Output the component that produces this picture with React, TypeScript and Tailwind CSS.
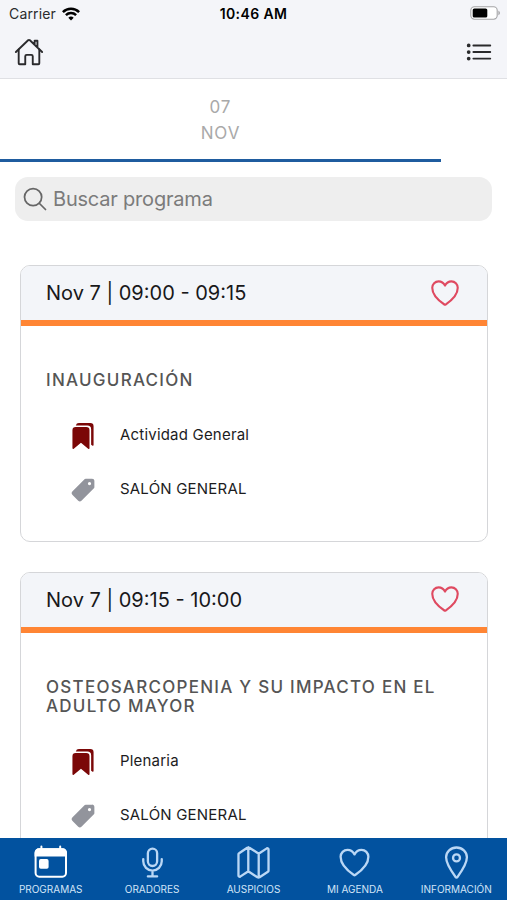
import type { IconType } from 'react-icons'
import {
  IoBookmarks,
  IoHeartOutline,
  IoHomeOutline,
  IoListOutline,
  IoLocationOutline,
  IoMapOutline,
  IoMicOutline,
  IoPricetag,
  IoSearchOutline,
} from 'react-icons/io5'

interface Sesion {
  horario: string
  titulo: string
  tipo: string
  salon: string
}

const sesiones: Sesion[] = [
  { horario: 'Nov 7 | 09:00 - 09:15', titulo: 'INAUGURACIÓN', tipo: 'Actividad General', salon: 'SALÓN GENERAL' },
  {
    horario: 'Nov 7 | 09:15 - 10:00',
    titulo: 'OSTEOSARCOPENIA Y SU IMPACTO EN EL ADULTO MAYOR',
    tipo: 'Plenaria',
    salon: 'SALÓN GENERAL',
  },
]

function HoyIcon({ size = 37 }: { size?: number | string }) {
  return (
    <svg width={size} height={size} viewBox="0 0 37 37" fill="none" stroke="currentColor" strokeWidth="2">
      <rect x="3.6" y="5.3" width="30.4" height="27.4" rx="3.6" />
      <path d="M2.6 8.7a4.4 4.4 0 0 1 4.4-4.4h23.6A4.4 4.4 0 0 1 35 8.7v3.9H2.6z" fill="currentColor" stroke="none" />
      <path d="M9.4 2.5v3M28.2 2.5v3" strokeLinecap="round" />
      <rect x="7" y="15.1" width="9.6" height="9.6" rx="1.8" fill="currentColor" stroke="none" />
    </svg>
  )
}

const tabs: { label: string; icon: IconType | typeof HoyIcon; activo?: boolean }[] = [
  { label: 'PROGRAMAS', icon: HoyIcon, activo: true },
  { label: 'ORADORES', icon: IoMicOutline },
  { label: 'AUSPICIOS', icon: IoMapOutline },
  { label: 'MI AGENDA', icon: IoHeartOutline },
  { label: 'INFORMACIÓN', icon: IoLocationOutline },
]

function StatusBar() {
  return (
    <div className="grid h-7 grid-cols-3 items-center pl-[9px] pr-[6px] text-black">
      <div className="flex items-center gap-[6px] pb-px">
        <span className="text-[14px] tracking-[0.15px] text-[#2b2b2d]">Carrier</span>
        <svg width="18" height="14" viewBox="0 0 18 14" fill="none" stroke="currentColor" strokeWidth="2.5">
          <path d="M0.9 5.1a11.5 11.5 0 0 1 16.2 0" />
          <path d="M3.9 8.2a7.3 7.3 0 0 1 10.2 0" />
          <path d="M9 13.6 6.3 10.8a3.9 3.9 0 0 1 5.4 0z" fill="currentColor" stroke="none" />
        </svg>
      </div>
      <span className="pb-px pr-[3px] text-center text-[14px] font-semibold tracking-[0.4px]">10:46 AM</span>
      <svg className="mb-[2px] justify-self-end" width="31" height="14" viewBox="0 0 31 14">
        <rect x="0.8" y="0.8" width="26.4" height="12.4" rx="3.6" fill="#fff" stroke="#a5a5a7" strokeWidth="1.1" />
        <rect x="2.7" y="2.5" width="14.6" height="9" rx="1.6" fill="#000" />
        <path d="M28.4 4.8c2 .7 2 3.7 0 4.4z" fill="#a5a5a7" />
      </svg>
    </div>
  )
}

function SesionCard({ sesion }: { sesion: Sesion }) {
  return (
    <article className="overflow-hidden rounded-[10px] border-[1.5px] border-[#d5d6d9] bg-white">
      <header className="flex h-[60px] items-center justify-between border-b-6 border-[#ff8534] bg-[#f3f5f9] pl-[25px] pr-[25px]">
        <span className="text-[20px] text-[#18181a]">{sesion.horario}</span>
        <IoHeartOutline size={34} className="mb-px text-[#df4a61]" />
      </header>
      <div className="px-[25px] pt-[45px] pb-[24px]">
        <h2 className="text-[17px] leading-[19.5px] font-medium tracking-[1.26px] text-[#555]">{sesion.titulo}</h2>
        <div className="mt-[18px] flex flex-col pl-[24px] text-[15px] tracking-[0.2px] text-[#1c1c1e]">
          <div className="flex h-[54px] items-center gap-[24px]">
            <IoBookmarks size={26} className="text-[#7b0707]" />
            <span>{sesion.tipo}</span>
          </div>
          <div className="flex h-[54px] items-center gap-[24px]">
            <IoPricetag size={26} className="text-[#92949c]" />
            <span>{sesion.salon}</span>
          </div>
        </div>
      </div>
    </article>
  )
}

export default function App() {
  return (
    <div className="flex h-[900px] w-[507px] flex-col overflow-hidden bg-white font-['Inter','Liberation_Sans',sans-serif]">
      <div className="h-[79px] shrink-0 border-b border-[#dfe0e4] bg-[#f4f5f9]">
        <StatusBar />
        <div className="flex items-center justify-between pt-[9px] pr-[13px] pl-[14px] text-[#2a2a2c]">
          <IoHomeOutline size={30} />
          <IoListOutline size={30} />
        </div>
      </div>

      <main className="flex min-h-0 flex-1 flex-col overflow-hidden">
        <button className="flex h-[83px] w-[441px] shrink-0 flex-col items-center border-b-3 border-[#1f5c9f] pt-[15px] text-[17px] leading-[26px] tracking-[0.9px] text-[#a9a9a9]">
          <span>07</span>
          <span>NOV</span>
        </button>

        <label className="mx-[15px] mt-[15px] flex h-[44px] shrink-0 items-center gap-[4px] rounded-[13px] bg-[#eee] px-[6px]">
          <IoSearchOutline size={28} className="text-[#666]" />
          <input
            className="min-w-0 flex-1 bg-transparent text-[20px] tracking-[-0.2px] outline-none placeholder:text-[#7b7b7b]"
            placeholder="Buscar programa"
          />
        </label>

        <div className="mt-[44px] flex flex-col gap-[30px] pl-[20px] pr-[19px]">
          {sesiones.map((s) => (
            <SesionCard key={s.horario} sesion={s} />
          ))}
        </div>
      </main>

      <nav className="grid h-[62px] shrink-0 grid-cols-5 bg-[#02529f]">
        {tabs.map(({ label, icon: Icon, activo }) => (
          <button key={label} className={`flex flex-col items-center pt-[6px] ${activo ? 'text-white' : 'text-[#bad7f5]'}`}>
            <Icon size={37} />
            <span className="mt-px text-[10px] leading-[14px] whitespace-nowrap text-[#d3e5f8]">{label}</span>
          </button>
        ))}
      </nav>
    </div>
  )
}
